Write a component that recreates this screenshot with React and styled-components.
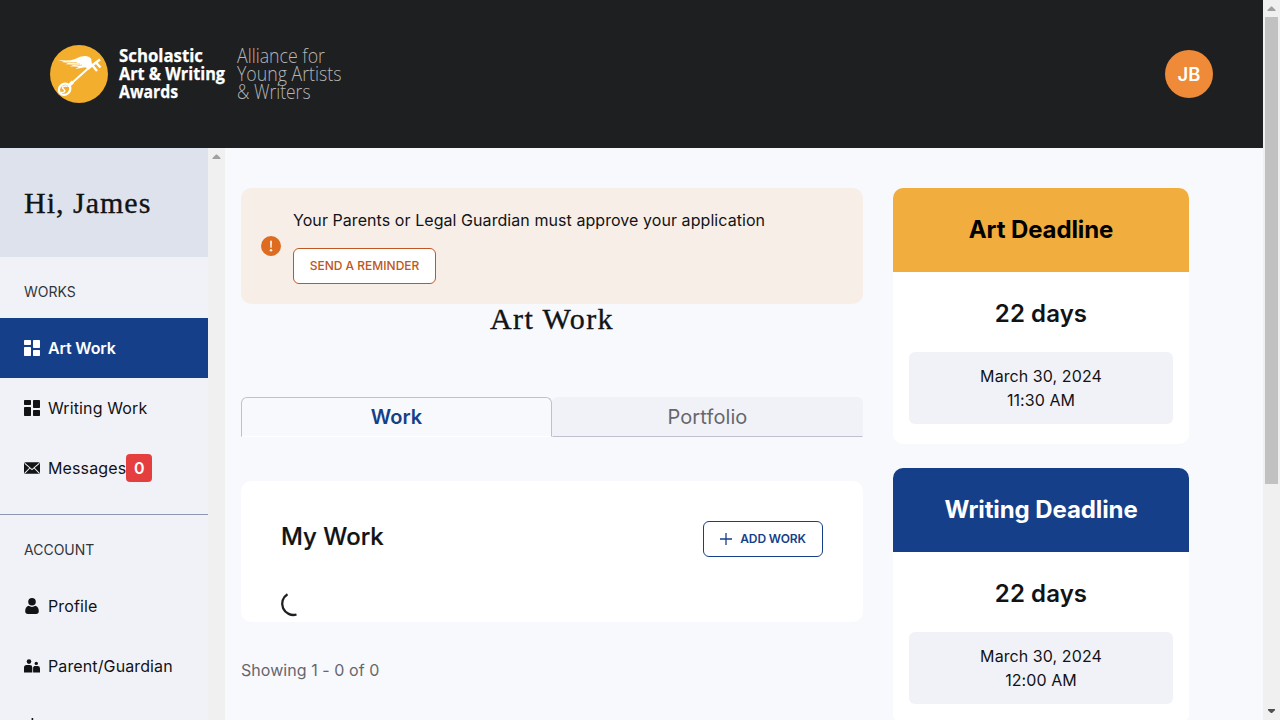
import React from 'react';
import styled, { createGlobalStyle } from 'styled-components';

const GlobalStyle = createGlobalStyle`
  * { box-sizing: border-box; }
  body { margin: 0; background: #f8f9fd; color: #111315; font: 400 16px/24px Inter, sans-serif; overflow: hidden; }
  h1, h2, p { margin: 0; }
  button { font-family: inherit; }
`;

const Window = styled.div`display: flex; height: 720px; overflow: hidden;`;
const Page = styled.div`display: flex; flex-direction: column; width: 1263px; height: 720px;`;
const Header = styled.header`
  flex: 0 0 148px; display: flex; align-items: center; justify-content: space-between;
  padding: 0 50px; background: #1e1f21;
`;
const Logo = styled.svg`display: block; width: 300px; height: 60px; overflow: visible;`;
const Avatar = styled.div`
  width: 48px; height: 48px; border-radius: 50%; background: #ee8a38; color: #fff;
  font-size: 18.5px; font-weight: 600; line-height: 48px; text-align: center;
`;
const Body = styled.div`flex: 1; min-height: 0; display: flex;`;
const Sidebar = styled.nav`width: 208px; height: 572px; overflow: hidden; background: #f1f2f8; display: flex; flex-direction: column;`;
const Serif = styled.h1`
  font-family: 'Liberation Serif', serif; font-weight: 400; font-size: ${p => p.$size}px;
  line-height: ${p => p.$line}px; letter-spacing: ${p => p.$spacing}px; -webkit-text-stroke: 0.35px currentColor;
`;
const Greeting = styled.div`flex: 0 0 109px; padding: 39px 24px 0; background: #dee2ed;`;
const GroupTitle = styled.div`
  flex: none; height: 61px; padding: 25px 24px 0;
  font-size: 14px; line-height: 20px; color: #333539;
`;
const NavItem = styled.a`
  flex: 0 0 60px; display: flex; align-items: center; padding: 0 24px;
  color: ${p => (p.$active ? '#fff' : '#111315')}; background: ${p => (p.$active ? '#163f8a' : 'transparent')};
  font-weight: ${p => (p.$active ? 600 : 400)}; letter-spacing: ${p => (p.$active ? '-0.15px' : '0.12px')};
  svg { flex: none; width: 16px; height: 16px; margin-right: 8px; fill: currentColor; }
`;
const Badge = styled.span`
  width: 26px; height: 28px; border-radius: 4px; background: #e53e3e; color: #fff;
  font-weight: 600; line-height: 28px; text-align: center; letter-spacing: 0;
`;
const Divider = styled.div`flex: 0 0 1px; margin-top: 16px; background: #8c97b2;`;

const Track = styled.div`
  flex: 0 0 17px; display: flex; flex-direction: column; align-items: center; background: #f0f0f0;
`;
const Arrow = styled.svg`flex: none; width: 17px; height: 17px; fill: ${p => p.$color};`;
const Thumb = styled.div`width: 13px; height: 467px; margin-bottom: auto; background: #c1c1c1;`;

const Main = styled.main`flex: 1; display: flex; gap: 30px; padding: 40px 0 0 16px; align-items: flex-start;`;
const Content = styled.section`width: 622px;`;
const Notice = styled.div`
  height: 116px; border-radius: 10px; background: #f8eee8; padding: 0 20px;
  display: flex; align-items: center; gap: 12px;
  > svg { width: 20px; height: 20px; flex: none; }
`;
const NoticeBody = styled.div`
  display: flex; flex-direction: column; align-items: flex-start; gap: 16px;
  p { letter-spacing: 0.065px; }
`;
const Button = styled.button`
  height: 36px; width: ${p => p.$width}px; padding: 0 0 1px; border: 1px solid ${p => p.$color};
  border-radius: 6px; background: #fff; color: ${p => p.$color}; font-size: 12px; line-height: 17px; font-weight: ${p => p.$weight};
  letter-spacing: ${p => p.$spacing}px;
  display: flex; align-items: center; justify-content: center; gap: 8px; white-space: nowrap;
  svg { width: 12px; height: 12px; }
`;
const TitleRow = styled.div`height: 93px; display: flex; justify-content: center;`;
const Tabs = styled.div`display: flex; height: 40px;`;
const Tab = styled.div`
  flex: 1; font-size: 20px; line-height: 38px; text-align: center; letter-spacing: 0.1px;
  color: ${p => (p.$active ? '#163f8a' : '#66676d')}; font-weight: ${p => (p.$active ? 600 : 400)};
  background: ${p => (p.$active ? '#f8f9fd' : '#f1f2f8')};
  border: 1px solid ${p => (p.$active ? '#b9c2d5' : 'transparent')};
  border-bottom-color: ${p => (p.$active ? '#fff' : '#bfc0cf')};
  border-radius: 6px 6px 0 0;
`;
const Card = styled.div`margin-top: 44px; height: 141px; padding: 40px 40px 0; border-radius: 10px; background: #fff;`;
const CardHead = styled.div`
  display: flex; justify-content: space-between; height: 70px; align-items: flex-start;
  h2 { font-size: 24px; line-height: 32px; font-weight: 500; -webkit-text-stroke: 0.2px currentColor; }
`;
const Spinner = styled.svg`display: block; width: 26px; height: 26px; overflow: visible;`;
const Count = styled.p`margin-top: 36px; color: #66676d; letter-spacing: 0.06px;`;
const Aside = styled.aside`width: 296px; display: flex; flex-direction: column; gap: 24px;`;
const Deadline = styled.div`height: 256px; border-radius: 10px; overflow: hidden; background: #fff; text-align: center;`;
const DeadlineHead = styled.div`
  height: 84px; line-height: 84px; font-size: 24px; font-weight: 700; letter-spacing: -0.1px;
  background: ${p => p.$bg}; color: ${p => p.$color};
`;
const Days = styled.div`height: 80px; line-height: 84px; font-size: 24px; font-weight: 600; letter-spacing: 0.1px;`;
const DateBox = styled.div`
  height: 72px; margin: 0 16px; padding: 12px; border-radius: 6px; background: #f1f2f8; letter-spacing: 0.08px;
`;

const GridIcon = () => (
  <svg viewBox="0 0 16 16"><rect width="7" height="5" rx=".7" /><rect y="7" width="7" height="9" rx=".7" /><rect x="9" width="7" height="8" rx=".7" /><rect x="9" y="10" width="7" height="6" rx=".7" /></svg>
);
const MailIcon = () => (
  <svg viewBox="0 0 16 16"><rect y="2.2" width="16" height="11.6" rx="1.6" /><path d="M.8 3.3 8 9.6l7.2-6.3M.8 13.2l5-5.2M15.2 13.2l-5-5.2" fill="none" stroke="#f1f2f8" strokeWidth="1.05" /></svg>
);
const UserIcon = () => (
  <svg viewBox="0 0 16 16"><circle cx="8" cy="3.8" r="3.8" /><path d="M4.6 7.8Q8 10.1 11.4 7.8C13.8 8.6 14.8 10.4 14.8 13.2 14.8 15 13.8 16 12 16H4C2.2 16 1.2 15 1.2 13.2 1.2 10.4 2.2 8.6 4.6 7.8Z" /></svg>
);
const FamilyIcon = () => (
  <svg viewBox="0 0 16 16"><circle cx="5" cy="3.6" r="2.3" /><circle cx="12.3" cy="5.4" r="1.7" /><path d="M0 14.5V9.6Q0 7 2.6 7H5.8Q8.3 7 8.3 9.4V14.5ZM9.1 14.5V9.2L10.4 8H13.6Q16 8 16 10.4V14.5Z" /></svg>
);
const PinIcon = () => (
  <svg viewBox="0 0 16 16"><path d="M7.6 0h1.6v2h-1.6zM3 3h10v12H3z" /></svg>
);

const logoBold = [['Scholastic', 18, 84], ['Art & Writing', 36, 106], ['Awards', 53.5, 59]];
const logoLight = [['Alliance for', 18.5, 88], ['Young Artists', 36.5, 104.5], ['& Writers', 55, 73.5]];

const BrandLogo = () => (
  <Logo viewBox="0 0 300 60">
    <circle cx="29" cy="30" r="29" fill="#f2ae2c" />
    <g stroke="#fff" fill="none">
      <path d="M18 42.5 42 21" strokeWidth="2" />
      <path d="M19.5 41 23 37.8" strokeWidth="3.4" />
      <path d="M38 24.5 50 15.5M42.5 21.5l4.5 5.5M46 18.5l4.5 5" strokeWidth="2.4" />
      <ellipse cx="14.6" cy="45.3" rx="6" ry="5.3" transform="rotate(-42 14.6 45.3)" strokeWidth="2.3" />
      <path d="M17.5 42.2c-4-1-6.5 1-4 2.8s1 4-2.5 3.5" strokeWidth="1.5" />
    </g>
    <path d="M7 15.8q12 1.8 18-.8 6-3.5 12-2.8 5 .8 4.5 5.2l.8 4.2-3.5 4.2-3.5-2.5-9.8 1.7 3-2-8.5-.2 3-1.5-8-.7 3-1.2-7-1.3 3-.7Z" fill="#fff" />
    <path d="m11 18.3 16 .2M15 20.6l15-.6M21 23l11-2" stroke="#f2ae2c" strokeWidth=".6" />
    <g fill="#fff" fontFamily="Open Sans, sans-serif" fontSize="18.5" fontWeight="700" stroke="#fff" strokeWidth=".25">
      {logoBold.map(([t, y, w]) => <text key={t} x="69" y={y} textLength={w} lengthAdjust="spacingAndGlyphs">{t}</text>)}
    </g>
    <g fill="#b4b5b6" fontFamily="Open Sans, sans-serif" fontSize="19.5" fontWeight="300">
      {logoLight.map(([t, y, w]) => <text key={t} x="187" y={y} textLength={w} lengthAdjust="spacingAndGlyphs">{t}</text>)}
    </g>
  </Logo>
);

const UpArrow = () => <Arrow $color="#a0a0a0" viewBox="0 0 17 17"><path d="M4.5 11h8v-1L9 6.5H8L4.5 10Z" /></Arrow>;
const DownArrow = () => <Arrow $color="#505050" viewBox="0 0 17 17"><path d="M5 6h7v1.2L9 10H8L5 7.2Z" /></Arrow>;

const DeadlineCard = ({ title, bg, color, time }) => (
  <Deadline>
    <DeadlineHead $bg={bg} $color={color}>{title}</DeadlineHead>
    <Days>22 days</Days>
    <DateBox>March 30, 2024<br />{time}</DateBox>
  </Deadline>
);

export default function App() {
  return (
    <Window>
      <GlobalStyle />
      <Page>
        <Header><BrandLogo /><Avatar>JB</Avatar></Header>
        <Body>
          <Sidebar>
            <Greeting><Serif $size={30} $line={32} $spacing={1}>Hi, James</Serif></Greeting>
            <GroupTitle>WORKS</GroupTitle>
            <NavItem $active><GridIcon />Art Work</NavItem>
            <NavItem><GridIcon />Writing Work</NavItem>
            <NavItem><MailIcon />Messages<Badge>0</Badge></NavItem>
            <Divider />
            <GroupTitle>ACCOUNT</GroupTitle>
            <NavItem><UserIcon />Profile</NavItem>
            <NavItem><FamilyIcon />Parent/Guardian</NavItem>
            <NavItem><PinIcon />Account</NavItem>
          </Sidebar>
          <Track><UpArrow /></Track>
          <Main>
            <Content>
              <Notice>
                <svg viewBox="0 0 20 20"><circle cx="10" cy="10" r="10" fill="#dd6b20" /><path d="M9 4.7h2l-.3 7H9.3z" fill="#f8eee8" /><circle cx="10" cy="14.2" r="1.25" fill="#f8eee8" /></svg>
                <NoticeBody>
                  <p>Your Parents or Legal Guardian must approve your application</p>
                  <Button $width={143} $color="#c05621" $weight={500} $spacing={0}>SEND A REMINDER</Button>
                </NoticeBody>
              </Notice>
              <TitleRow><Serif $size={30} $line={29} $spacing={1.4}>Art Work</Serif></TitleRow>
              <Tabs><Tab $active>Work</Tab><Tab>Portfolio</Tab></Tabs>
              <Card>
                <CardHead>
                  <h2>My Work</h2>
                  <Button $width={120} $color="#163f8a" $weight={600} $spacing={-0.15}>
                    <svg viewBox="0 0 12 12"><path d="M6 0v12M0 6h12" stroke="currentColor" strokeWidth="1.3" /></svg>ADD WORK
                  </Button>
                </CardHead>
                <Spinner viewBox="0 0 26 26"><path d="M7.3 2.8A11.2 11.2 0 0 0 16.3 23.1" transform="translate(-.8 .4)" fill="none" stroke="#1e1f21" strokeWidth="2.3" /></Spinner>
              </Card>
              <Count>Showing 1 - 0 of 0</Count>
            </Content>
            <Aside>
              <DeadlineCard title="Art Deadline" bg="#f1ad3d" color="#000" time="11:30 AM" />
              <DeadlineCard title="Writing Deadline" bg="#163f8a" color="#fff" time="12:00 AM" />
            </Aside>
          </Main>
        </Body>
      </Page>
      <Track><UpArrow /><Thumb /><DownArrow /></Track>
    </Window>
  );
}
